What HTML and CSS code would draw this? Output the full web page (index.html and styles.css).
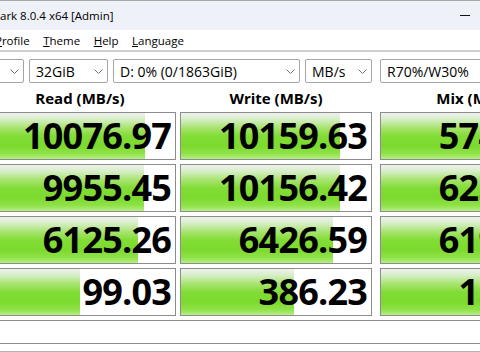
FILE: index.html
```html
<!DOCTYPE html>
<html lang="en">
<head>
  <meta charset="UTF-8" />
  <meta name="viewport" content="width=device-width, initial-scale=1.0"/>
  <title>CrystalDiskMark 8.0.4 x64 [Admin]</title>
  <link rel="stylesheet" href="styles.css">
</head>
<body>
  <div class="titlebar">
    <span class="title">ark 8.0.4 x64 [Admin]</span>
    <span class="minimize"></span>
  </div>
  <div class="menubar">
    <span class="menu first"><u>P</u>rofile</span>
    <span class="menu"><u>T</u>heme</span>
    <span class="menu"><u>H</u>elp</span>
    <span class="menu"><u>L</u>anguage</span>
  </div>

  <div class="toolbar">
    <div class="combo c-count"><span>5</span><svg class="chev" width="9" height="5" viewBox="0 0 9 5"><path d="M0.5 0.5 L4.5 4.5 L8.5 0.5" /></svg></div>
    <div class="combo c-size"><span>32GiB</span><svg class="chev" width="9" height="5" viewBox="0 0 9 5"><path d="M0.5 0.5 L4.5 4.5 L8.5 0.5" /></svg></div>
    <div class="combo c-drive"><span>D: 0% (0/1863GiB)</span><svg class="chev" width="9" height="5" viewBox="0 0 9 5"><path d="M0.5 0.5 L4.5 4.5 L8.5 0.5" /></svg></div>
    <div class="combo c-unit"><span>MB/s</span><svg class="chev" width="9" height="5" viewBox="0 0 9 5"><path d="M0.5 0.5 L4.5 4.5 L8.5 0.5" /></svg></div>
    <div class="combo c-mix"><span>R70%/W30%</span><svg class="chev" width="9" height="5" viewBox="0 0 9 5"><path d="M0.5 0.5 L4.5 4.5 L8.5 0.5" /></svg></div>
  </div>

  <div class="results">
    <div class="head">Read (MB/s)</div>
    <div class="head">Write (MB/s)</div>
    <div class="head mix">Mix (MB/s)</div>

    <div class="cell" style="--fill:160px">10076.97</div>
    <div class="cell" style="--fill:159px">10159.63</div>
    <div class="cell mix" style="--fill:100%">5743.18</div>

    <div class="cell" style="--fill:159px">9955.45</div>
    <div class="cell" style="--fill:159px">10156.42</div>
    <div class="cell mix" style="--fill:100%">6238.90</div>

    <div class="cell" style="--fill:153px">6125.26</div>
    <div class="cell" style="--fill:152px">6426.59</div>
    <div class="cell mix" style="--fill:100%">6196.27</div>

    <div class="cell" style="--fill:95px">99.03</div>
    <div class="cell" style="--fill:113px">386.23</div>
    <div class="cell mix" style="--fill:100%">152.36</div>
  </div>

  <div class="comment"></div>
  <div class="status"></div>
</body>
</html>
```

FILE: styles.css
```css
body { margin: 0; width: 480px; height: 352px; overflow: hidden; background: #fff; font-family: "Open Sans", sans-serif; color: #000; }

.titlebar { height: 29px; border-top: 1px solid #a8a8a8; background: #eff1f8; display: flex; align-items: center; justify-content: space-between; }
.title { font-size: 11.5px; }
.minimize { width: 10px; height: 1px; background: #111; margin-right: 10px; }

.menubar { height: 20px; display: flex; align-items: center; gap: 13.5px; font-size: 11.5px; border-bottom: 2px solid #cfcfcf; }
.menu.first { margin-left: -5px; }

.toolbar { display: flex; gap: 5px; padding-top: 7px; margin-left: -37px; }
.combo { height: 22px; border: 1px solid #a6a6a6; border-radius: 2px; display: flex; align-items: center; justify-content: space-between; padding: 0 4px 0 6px; font-size: 14px; flex: none; }
.chev { fill: none; stroke: #707070; stroke-width: 1; }
.c-count { width: 49px; }
.c-size { width: 67px; }
.c-drive { width: 175px; }
.c-unit { width: 55px; }
.c-mix { width: 110px; margin-left: 3px; }

.results { display: grid; grid-template-columns: 192px 192px 196px; column-gap: 4px; row-gap: 4px; margin-left: -16px; }
.head { height: 24px; padding-top: 3px; margin-bottom: -2px; font-size: 15px; font-weight: bold; text-align: center; line-height: 24px; }
.mix { margin-left: 4px; }
.cell { height: 46px; border: 1px solid #8c8c8c; text-align: right; padding-right: 4px; font-size: 36px; font-weight: bold; line-height: 46px; letter-spacing: -0.8px;
  background: #fff linear-gradient(to bottom, #eef1ec 0%, #d6eec6 14%, #a8e470 32%, #82dc36 50%, #7cda2e 72%, #8fe248 88%, #b6ee86 100%) no-repeat;
  background-size: var(--fill) 100%; }

.comment { height: 22px; margin-top: 4px; border-top: 1px solid #8c8c8c; border-bottom: 1px solid #8c8c8c; }
.status { margin-top: 7px; border-top: 1px solid #b4b4b4; height: 2px; }
```
